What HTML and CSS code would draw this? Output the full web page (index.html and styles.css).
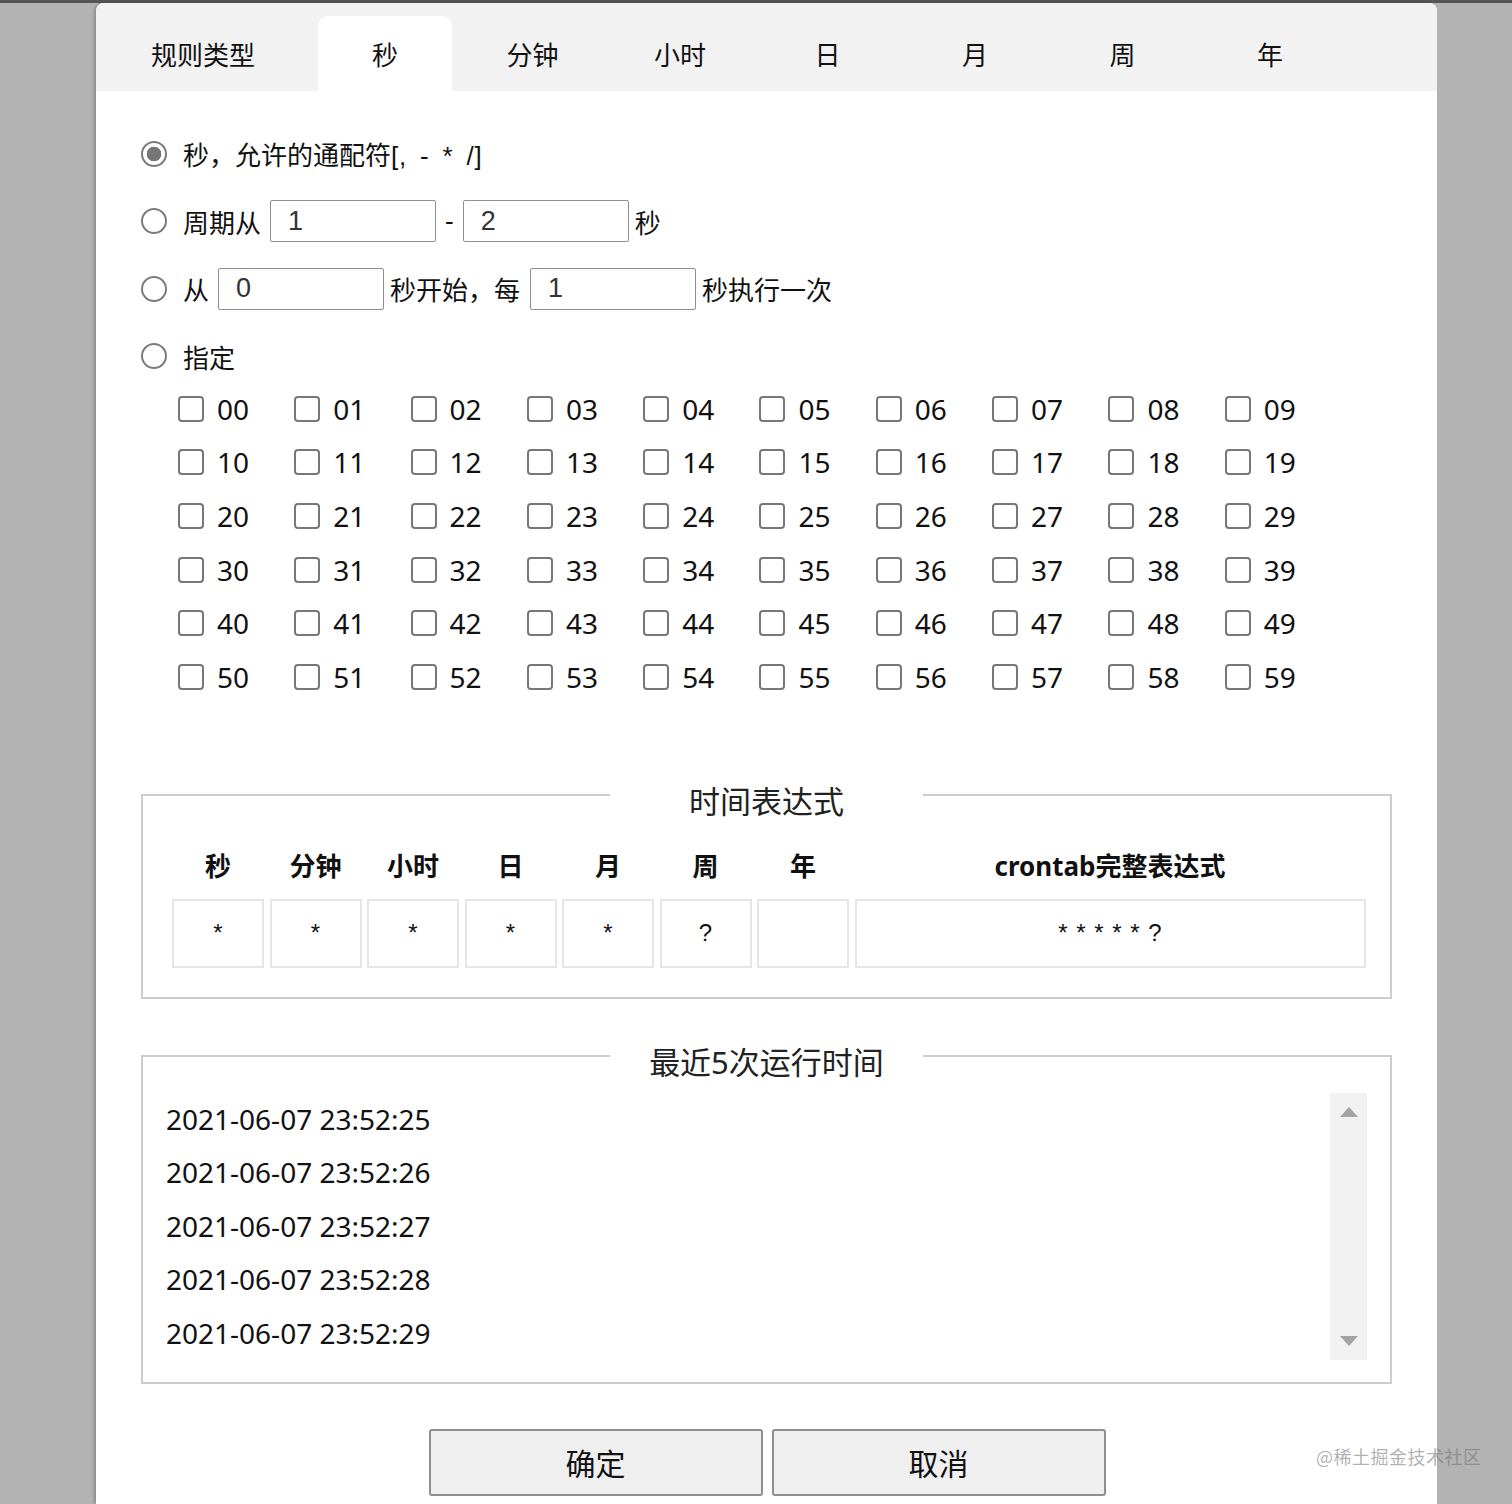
FILE: index.html
```html
<!DOCTYPE html>
<html lang="zh-CN">
<head>
<meta charset="utf-8">
<title>Cron 表达式</title>
<link rel="stylesheet" href="styles.css">
</head>
<body>
<div class="topbar"></div>
<div class="dialog">
  <div class="tabs">
    <div class="tab tab-first">规则类型</div>
    <div class="tab active">秒</div>
    <div class="tab">分钟</div>
    <div class="tab">小时</div>
    <div class="tab">日</div>
    <div class="tab">月</div>
    <div class="tab">周</div>
    <div class="tab">年</div>
  </div>
  <div class="content">
    <div class="options">
      <label class="row"><input type="radio" name="t" class="radio" checked><span>秒，允许的通配符<span class="wild">[, - * /]</span></span></label>
      <label class="row"><input type="radio" name="t" class="radio"><span>周期从</span><input class="num" value="1"><span class="dash">-</span><input class="num" value="2"><span class="after">秒</span></label>
      <label class="row"><input type="radio" name="t" class="radio"><span>从</span><input class="num" value="0"><span class="mid">秒开始，每</span><input class="num" value="1"><span class="after">秒执行一次</span></label>
      <label class="row"><input type="radio" name="t" class="radio"><span>指定</span></label>
    </div>
    <div class="grid" id="grid"></div>

    <fieldset class="box expr">
      <legend>时间表达式</legend>
      <div class="table">
        <div class="th">秒</div><div class="th">分钟</div><div class="th">小时</div><div class="th">日</div><div class="th">月</div><div class="th">周</div><div class="th">年</div><div class="th">crontab完整表达式</div>
        <div class="td">*</div><div class="td">*</div><div class="td">*</div><div class="td">*</div><div class="td">*</div><div class="td q">?</div><div class="td"></div><div class="td full">* * * * * ?</div>
      </div>
    </fieldset>

    <fieldset class="box runs">
      <legend>最近5次运行时间</legend>
      <div class="list">
        <div class="lines">
          <div class="line">2021-06-07 23:52:25</div>
          <div class="line">2021-06-07 23:52:26</div>
          <div class="line">2021-06-07 23:52:27</div>
          <div class="line">2021-06-07 23:52:28</div>
          <div class="line">2021-06-07 23:52:29</div>
        </div>
        <div class="scrollbar"><span class="arrow up"></span><span class="arrow down"></span></div>
      </div>
    </fieldset>

    <div class="buttons">
      <button class="btn">确定</button>
      <button class="btn">取消</button>
    </div>
  </div>
</div>
<div class="watermark">@稀土掘金技术社区</div>
<script src="script.js"></script>
</body>
</html>
```

FILE: script.js
```js
var g = document.getElementById('grid');
for (var i = 0; i < 60; i++) {
  var l = document.createElement('label');
  l.className = 'cell';
  var c = document.createElement('input');
  c.type = 'checkbox';
  c.className = 'check';
  var s = document.createElement('span');
  s.textContent = (i < 10 ? '0' : '') + i;
  l.appendChild(c);
  l.appendChild(s);
  g.appendChild(l);
}
```

FILE: styles.css
```css
html, body {
  margin: 0;
  padding: 0;
}
body {
  background: #b3b3b3;
  width: 1512px;
  height: 1504px;
  overflow: hidden;
  position: relative;
  font-family: "Noto Sans", "Noto Sans CJK SC", sans-serif;
  color: #111;
}
.topbar {
  height: 3px;
  background: #555;
}
.dialog {
  margin-left: 96px;
  width: 1341px;
  height: 1501px;
  background: #fff;
  border-radius: 8px 8px 0 0;
  overflow: hidden;
  box-shadow: -2px 0 3px rgba(0,0,0,0.22);
}
.tabs {
  height: 88px;
  background: #f2f2f2;
  display: flex;
  align-items: flex-end;
  font-family: "Noto Sans CJK SC", sans-serif;
  font-size: 26px;
  color: #111;
}
.tab {
  width: 134px;
  height: 75px;
  margin-right: 13.5px;
  display: flex;
  align-items: center;
  justify-content: center;
  box-sizing: border-box;
  border-radius: 10px 10px 0 0;
}
.tab-first {
  width: 214px;
  margin-right: 8px;
}
.tab.active {
  background: #fff;
}
.content {
  padding: 29px 45px 0 45px;
}
.options {
  font-family: "Liberation Sans", "Noto Sans CJK SC", sans-serif;
  font-size: 26px;
}
.wild {
  word-spacing: 5px;
  letter-spacing: 0.8px;
}
.row {
  display: flex;
  align-items: center;
  height: 67.5px;
}
.radio {
  appearance: none;
  -webkit-appearance: none;
  width: 26px;
  height: 26px;
  margin: 0 16px 0 0;
  border: 2px solid #7b7b7b;
  border-radius: 50%;
  background: #fff;
  box-sizing: border-box;
  flex: none;
}
.radio:checked {
  background: radial-gradient(circle, #767676 0 7px, #fff 7.6px);
}
.num {
  width: 166px;
  height: 42px;
  box-sizing: border-box;
  border: 1px solid #8f8f8f;
  border-radius: 2px;
  padding: 0 0 0 17px;
  margin: 0 6px 0 9px;
  font-family: "Liberation Sans", sans-serif;
  font-size: 27px;
  color: #333;
  background: #fff;
}
.dash {
  margin: 0 0 0 3px;
}
.mid {
  margin-right: 1px;
}
.grid {
  margin-top: -8px;
  padding-left: 37px;
  display: grid;
  grid-template-columns: repeat(10, 116.3px);
  grid-auto-rows: 53.6px;
  font-size: 28px;
}
.cell {
  display: flex;
  align-items: center;
}
.check {
  appearance: none;
  -webkit-appearance: none;
  width: 26px;
  height: 26px;
  margin: 0 13px 0 0;
  border: 2px solid #777;
  border-radius: 4px;
  background: #fff;
  box-sizing: border-box;
  flex: none;
}
.box {
  border: 2px solid #cdcdcd;
  margin: 0;
  padding: 0;
  min-width: 0;
  box-sizing: border-box;
  width: 1251px;
}
.box legend {
  width: 313px;
  box-sizing: border-box;
  margin: 0 auto;
  padding: 12px 0 0 0;
  line-height: 40px;
  text-align: center;
  font-family: "Noto Sans", "Noto Sans CJK SC", sans-serif;
  font-size: 31px;
  color: #222;
}
.expr {
  margin-top: 65px;
  padding-bottom: 29px;
}
.table {
  margin: 22px 0 0 29px;
  display: grid;
  grid-template-columns: repeat(7, 92px) 511px;
  grid-template-rows: 44px 69px;
  column-gap: 5.5px;
  row-gap: 12px;
}
.th {
  font-weight: bold;
  font-size: 26px;
  display: flex;
  align-items: center;
  justify-content: center;
}
.td {
  border: 2px solid #e6e6e6;
  box-sizing: border-box;
  display: flex;
  align-items: center;
  justify-content: center;
  font-family: "Liberation Sans", sans-serif;
  font-size: 24px;
  color: #111;
}
.full {
  word-spacing: 2px;
}
.runs {
  margin-top: 31px;
  padding-bottom: 21.5px;
}
.list {
  margin: 11px 23px 0 11px;
  display: flex;
  height: 267.5px;
}
.lines {
  flex: 1;
  padding-left: 12px;
}
.line {
  height: 53.5px;
  line-height: 53.5px;
  font-size: 28px;
  color: #111;
}
.scrollbar {
  width: 37px;
  background: #f1f1f1;
  display: flex;
  flex-direction: column;
  justify-content: space-between;
  align-items: center;
  padding: 14px 0 14px 0;
  box-sizing: border-box;
}
.arrow {
  width: 0;
  height: 0;
  border-left: 9px solid transparent;
  border-right: 9px solid transparent;
}
.arrow.up {
  border-bottom: 10px solid #a3a3a3;
}
.arrow.down {
  border-top: 10px solid #a3a3a3;
}
.buttons {
  margin-top: 45px;
  display: flex;
  justify-content: center;
  gap: 9px;
  padding-left: 1px;
}
.btn {
  width: 334px;
  height: 67px;
  background: #efefef;
  border: 2px solid #8f8f8f;
  border-radius: 3px;
  font-family: "Noto Sans CJK SC", sans-serif;
  font-size: 30px;
  color: #111;
  padding: 0;
}
.watermark {
  position: absolute;
  left: 1316px;
  top: 1443px;
  font-family: "Noto Sans CJK SC", sans-serif;
  font-size: 18px;
  color: rgba(110,110,110,0.55);
  letter-spacing: 0.5px;
}
```
